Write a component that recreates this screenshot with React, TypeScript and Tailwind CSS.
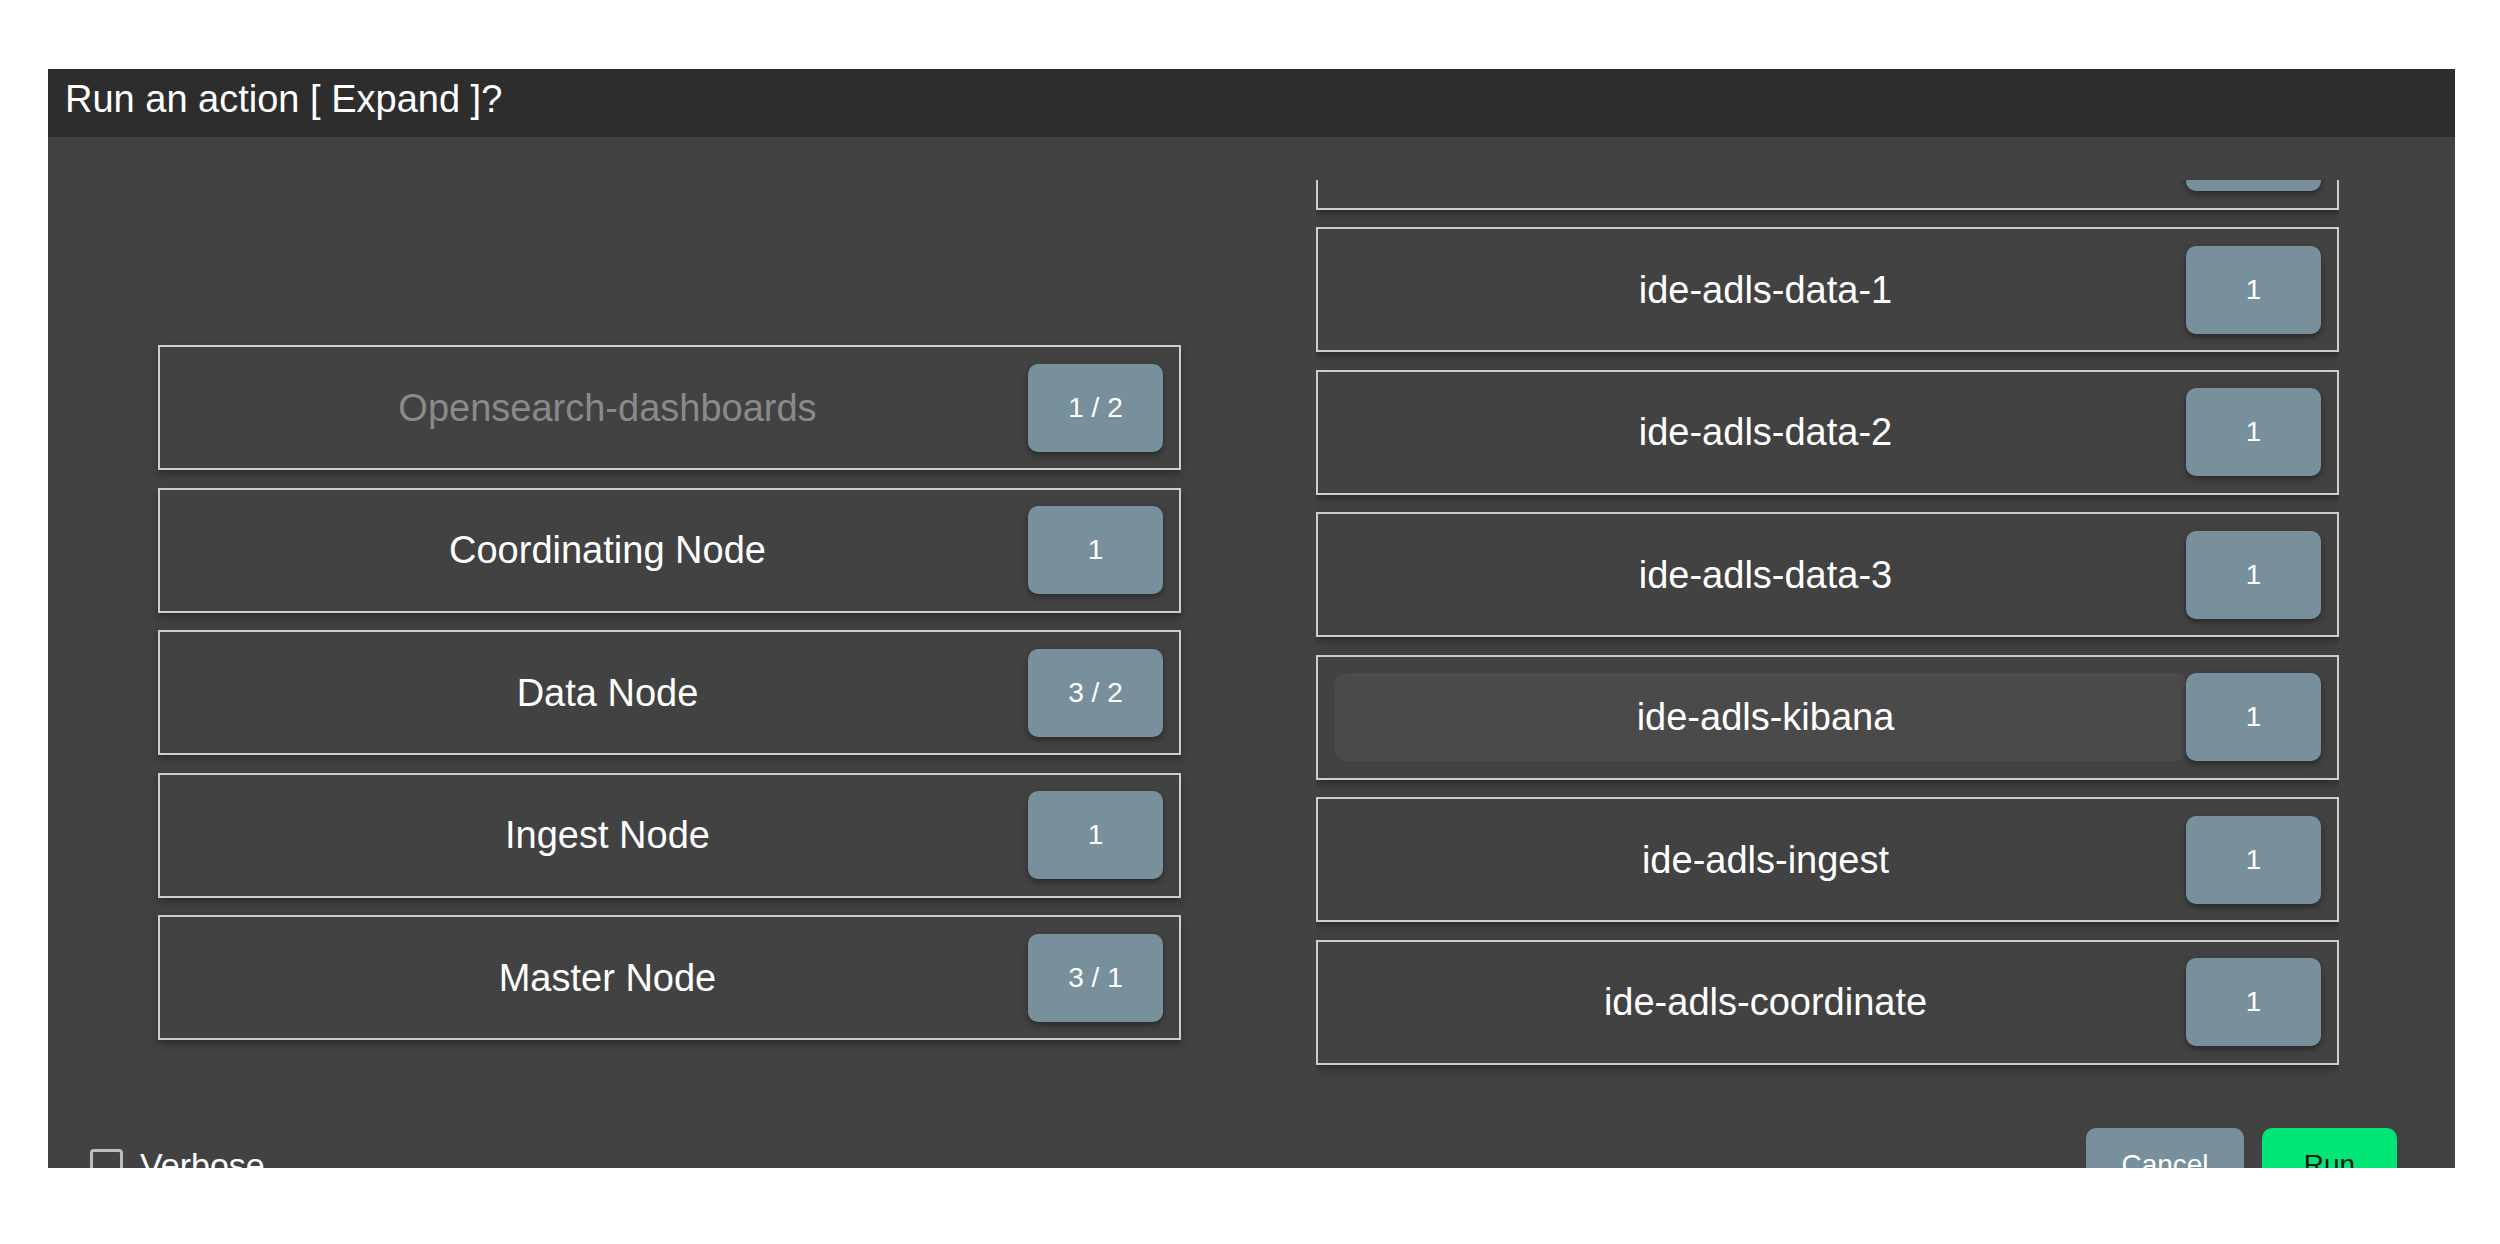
import React from 'react';

type NodeItem = {
    label: string;
    count: string;
    disabled?: boolean;
    hovered?: boolean;
};

const roleNodes: NodeItem[] = [
    {label: "Opensearch-dashboards", count: "1 / 2", disabled: true},
    {label: "Coordinating Node", count: "1"},
    {label: "Data Node", count: "3 / 2"},
    {label: "Ingest Node", count: "1"},
    {label: "Master Node", count: "3 / 1"},
];

const hostNodes: NodeItem[] = [
    {label: "ide-adls-master", count: "1"},
    {label: "ide-adls-data-1", count: "1"},
    {label: "ide-adls-data-2", count: "1"},
    {label: "ide-adls-data-3", count: "1"},
    {label: "ide-adls-kibana", count: "1", hovered: true},
    {label: "ide-adls-ingest", count: "1"},
    {label: "ide-adls-coordinate", count: "1"},
];

const NodeRow: React.FC<{ item: NodeItem }> = ({item}) => {
    return (
        <div className="flex items-center h-[125px] w-[1023px] shrink-0 border-2 border-[#cdcdcd] bg-[#424242] pl-[17px] pr-[16px] shadow-[0_4px_8px_rgba(0,0,0,0.35)]">
            <button
                className={`flex-1 h-[88px] flex items-center justify-center pl-[10px] rounded-[10px] text-[38px] leading-none ${item.hovered ? "bg-[#4a4a4a]" : ""} ${item.disabled ? "text-[#8a8a8a]" : "text-white"}`}>
                {item.label}
            </button>
            <div className="w-[135px] h-[88px] flex items-center justify-center rounded-[10px] bg-[#78909c] text-white text-[28px] shadow-[0_3px_6px_rgba(0,0,0,0.4)]">
                {item.count}
            </div>
        </div>
    );
};

const App: React.FC = () => {
    return (
        <div className="w-[2500px] h-[1244px] bg-white pt-[69px] pl-[48px] font-['Liberation_Sans',Arial,sans-serif]">
            <div className="w-[2407px] h-[1099px] overflow-hidden flex flex-col bg-[#424242]">
                <div className="h-[68px] shrink-0 flex items-center pl-[17px] pb-[7px] bg-[#2d2d2d] text-white text-[38px]">
                    Run an action [ Expand ]?
                </div>

                <div className="flex gap-[135px] pl-[110px]">
                    <div className="mt-[208px] flex flex-col gap-[17.5px]">
                        {roleNodes.map((n) => <NodeRow key={n.label} item={n}/>)}
                    </div>
                    <div className="mt-[43px] h-[900px] overflow-hidden">
                        <div className="mt-[-95.5px] flex flex-col gap-[17.5px] pb-[8px]">
                            {hostNodes.map((n) => <NodeRow key={n.label} item={n}/>)}
                        </div>
                    </div>
                </div>

                <div className="mt-[48px] h-[74px] shrink-0 flex items-center justify-between pl-[42px] pr-[58px]">
                    <label className="flex items-center gap-[17px] text-white text-[34px]">
                        <span className="w-[33px] h-[33px] rounded-[4px] border-[3px] border-[#bdbdbd]"></span>
                        Verbose
                    </label>
                    <div className="flex gap-[18px]">
                        <button className="w-[158px] h-[74px] rounded-[10px] bg-[#78909c] text-white text-[28px]">
                            Cancel
                        </button>
                        <button className="w-[135px] h-[74px] rounded-[10px] bg-[#00e676] text-[#1a1a1a] text-[28px]">
                            Run
                        </button>
                    </div>
                </div>
            </div>
        </div>
    );
};

export default App;
